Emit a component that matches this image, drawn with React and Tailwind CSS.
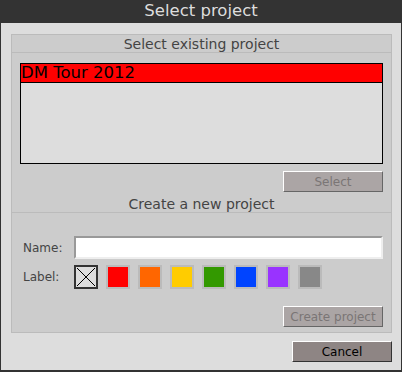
import React from 'react'

const swatches = ['#ff0000', '#ff6600', '#ffcc00', '#339900', '#0044ff', '#9933ff', '#888888']

const font = { fontFamily: '"DejaVu Sans", Verdana, sans-serif' }

const App = () => {
  return (
    <div className="w-[402px] h-[372px] bg-[#333333] flex flex-col" style={font}>
      {/* Title */}
      <div className="h-[23px] flex items-center justify-center text-[16.5px] text-[#dddddd] leading-none">
        Select project
      </div>

      {/* Body */}
      <div className="flex-1 mx-[1px] mb-[2px] bg-[#dddddd] pl-[10px] pr-[9px] pt-[11px] flex flex-col">
        {/* Group */}
        <div className="h-[299px] border border-[#bbbbbb] bg-[#cccccc] flex flex-col">
          <div className="h-[18px] border-b border-[#bbbbbb] flex items-center justify-center text-[14px] text-[#444444] leading-none">
            Select existing project
          </div>

          {/* Project list */}
          <div className="mt-[10px] mx-[8px] h-[101px] border border-black bg-[#dddddd]">
            <div className="h-[19px] bg-[#ff0000] border-b border-black text-[16.5px] text-black leading-[18px]">
              DM Tour 2012
            </div>
          </div>

          <div className="flex justify-end mr-[8px] mt-[7px]">
            <button className="w-[100px] h-[21px] bg-[#aba5a5] border border-t-white border-l-white border-r-[#666666] border-b-[#666666] text-[12px] text-[#7a7575] leading-none">
              Select
            </button>
          </div>

          <div className="h-[21px] border-b border-[#bbbbbb] flex items-end justify-center text-[14px] text-[#444444] leading-[14px] pb-[1px]">
            Create a new project
          </div>

          {/* Name */}
          <div className="flex items-center mt-[23px] ml-[11px] mr-[8px]">
            <span className="w-[51px] text-[12px] text-[#444444]">Name:</span>
            <div className="flex-1 h-[23px] bg-white border-2 border-t-[#999999] border-l-[#999999] border-r-[#eeeeee] border-b-[#eeeeee]" />
          </div>

          {/* Label */}
          <div className="flex items-center mt-[6px] ml-[11px]">
            <span className="w-[51px] text-[12px] text-[#444444]">Label:</span>
            <div className="flex gap-[8px]">
              <div className="w-[24px] h-[24px] border-2 border-[#333333] bg-[#dddddd]">
                <svg width="20" height="20" viewBox="0 0 20 20">
                  <path d="M1 1L19 19M19 1L1 19" stroke="#000" strokeWidth="1" />
                </svg>
              </div>
              {swatches.map((c) => (
                <div key={c} className="w-[24px] h-[24px] border-2 border-[#bbbbbb]" style={{ background: c }} />
              ))}
            </div>
          </div>

          <div className="flex justify-end mr-[8px] mt-[17px]">
            <button className="w-[100px] h-[21px] bg-[#aba5a5] border border-t-white border-l-white border-r-[#666666] border-b-[#666666] text-[12px] text-[#7a7575] leading-none">
              Create project
            </button>
          </div>
        </div>

        <div className="flex justify-end mt-[8px]">
          <button className="w-[100px] h-[21px] bg-[#8e8584] border border-t-white border-l-white border-r-[#333333] border-b-[#333333] text-[12px] text-black leading-none">
            Cancel
          </button>
        </div>
      </div>
    </div>
  )
}

export default App
